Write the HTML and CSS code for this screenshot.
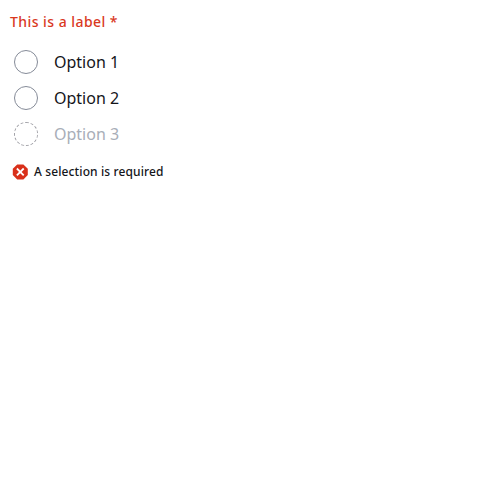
FILE: index.html
```html
<!DOCTYPE html>
<html lang="en">
<head>
<meta charset="utf-8">
<title>Radio group</title>
<link rel="stylesheet" href="styles.css">
</head>
<body>
<div class="group" role="radiogroup">
  <div class="label">This is a label *</div>
  <div class="option"><span class="radio"></span><span class="text">Option 1</span></div>
  <div class="option"><span class="radio"></span><span class="text">Option 2</span></div>
  <div class="option disabled"><span class="radio"></span><span class="text">Option 3</span></div>
  <div class="error">
    <svg class="icon" viewBox="0 0 16 16"><path class="shape" d="M5.2.4h6.2l4.4 4.4v6.2l-4.4 4.4H5.2L.8 11V4.8z"/><path class="cross" d="M4.9 4.5l6.8 6.8M11.7 4.5l-6.8 6.8"/></svg>
    <span>A selection is required</span>
  </div>
</div>
</body>
</html>
```

FILE: styles.css
```css
body {
  margin: 0;
  background: #fff;
  color: #14151a;
  font-family: "Noto Sans", sans-serif;
}
.group {
  padding: 12px 10px;
}
.label {
  height: 20px;
  margin-bottom: 12px;
  color: #d9381e;
  font-size: 14px;
  font-weight: 500;
  letter-spacing: 0.45px;
  line-height: 20px;
}
.option {
  display: flex;
  align-items: center;
  gap: 16px;
  height: 36px;
  padding-left: 4px;
  font-size: 16px;
  line-height: 24px;
}
.radio {
  box-sizing: border-box;
  width: 24px;
  height: 24px;
  border: 1px solid #858b98;
  border-radius: 50%;
}
.disabled {
  color: #a8aeb8;
}
.disabled .radio {
  border: 1px dashed #a2a2a8;
}
.error {
  display: flex;
  align-items: center;
  gap: 6px;
  height: 20px;
  margin-top: 10px;
  padding-left: 2px;
  font-size: 12px;
  font-weight: 500;
  letter-spacing: 0.12px;
  line-height: 16px;
}
.icon {
  width: 16px;
  height: 16px;
}
.shape {
  fill: #d9301a;
}
.cross {
  fill: none;
  stroke: #fff;
  stroke-width: 1.8;
}
```
